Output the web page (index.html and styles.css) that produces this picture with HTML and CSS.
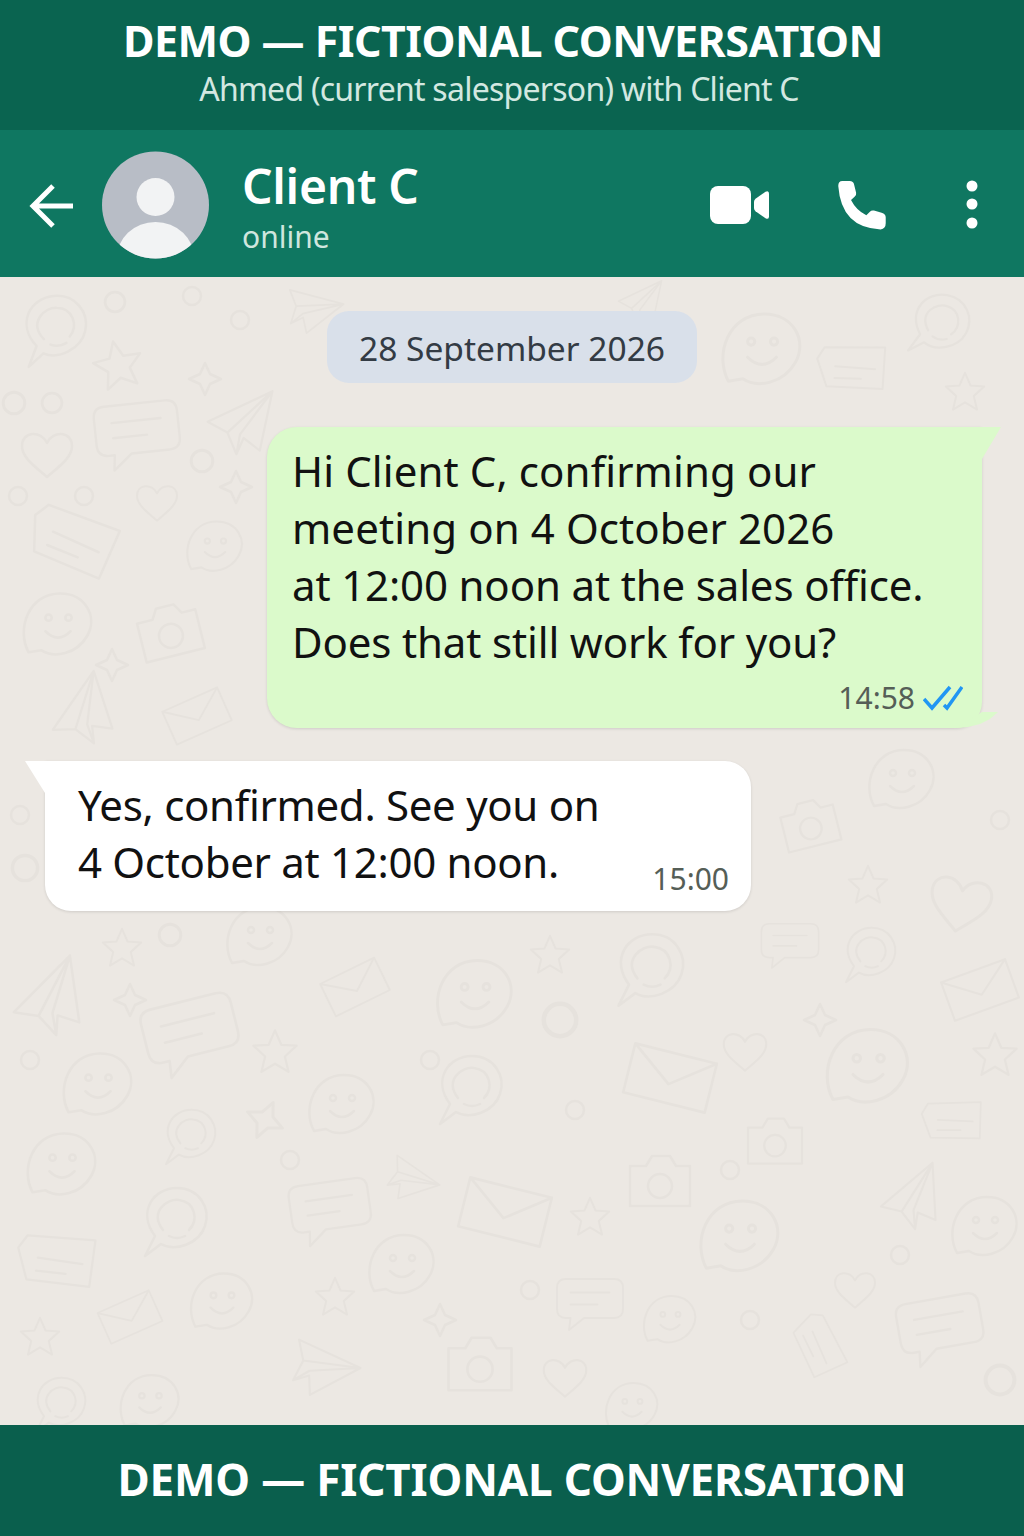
FILE: index.html
```html
<!DOCTYPE html>
<html lang="en">
<head>
    <meta charset="UTF-8">
    <meta name="viewport" content="width=device-width, initial-scale=1.0">
    <title>Demo - Fictional Conversation</title>
    <link rel="stylesheet" href="styles.css">
</head>
<body>
    <div class="phone">
        <header class="banner">
            <h1>DEMO — FICTIONAL CONVERSATION</h1>
            <p>Ahmed (current salesperson) with Client C</p>
        </header>

        <div class="appbar">
            <svg class="back" width="46" height="46" viewBox="0 0 46 46">
                <path d="M44 23H5M24 3 4 23l20 20" fill="none" stroke="#fff" stroke-width="5"/>
            </svg>
            <svg class="avatar" width="107" height="108" viewBox="0 0 107 108">
                <defs><clipPath id="avatarClip"><circle cx="53.5" cy="54" r="53.5"/></clipPath></defs>
                <circle cx="53.5" cy="54" r="53.5" fill="#b8bdc6"/>
                <circle cx="53.5" cy="46" r="19" fill="#f2f3f4"/>
                <ellipse cx="53.5" cy="108" rx="39" ry="37" fill="#f2f3f4" clip-path="url(#avatarClip)"/>
            </svg>
            <div class="contact">
                <div class="contact-name">Client C</div>
                <div class="contact-status">online</div>
            </div>
            <div class="appbar-icons">
                <svg width="60" height="38" viewBox="0 0 60 38">
                    <rect x="0" y="0" width="41" height="38" rx="8" fill="#fff"/>
                    <path d="M44 16q0-2 1.500-3.200l10-7q3.500-1.800 3.500 2v22.400q0 3.800-3.500 2l-10-7q-1.500-1.200-1.500-3.200z" fill="#fff"/>
                </svg>
                <svg width="49" height="50" viewBox="0 0 47.500 49">
                    <path d="M4 1h7q4 0 4.500 3.500l2 8q.5 2.500-1.500 4l-3.500 3q5 10 15 15l3.500-3.500q1.500-1.500 4-1l7.500 2q4 1 4 4.500v6q0 5.500-5 6Q3 47 0 6q0-5 4-5z" fill="#fff"/>
                </svg>
                <svg class="menu-dots" width="12" height="50" viewBox="0 0 12 50">
                    <circle cx="6" cy="6" r="5.500" fill="#fff"/>
                    <circle cx="6" cy="24" r="5.500" fill="#fff"/>
                    <circle cx="6" cy="43" r="5.500" fill="#fff"/>
                </svg>
            </div>
        </div>

        <main class="chat">
            <!-- wallpaper doodles -->
            <svg class="wallpaper" width="1024" height="1148" viewBox="0 277 1024 1148">
                <defs>
                    <g id="star"><path d="M0-24 7-8 24-7 11 5 15 22 0 13-15 22-11 5-24-7-7-8z" stroke-linejoin="round"/></g>
                    <g id="heart"><path d="M0 22C-14 10-25 2-25-9-25-24-6-25 0-12 6-25 25-24 25-9 25 2 14 10 0 22z" stroke-linejoin="round"/></g>
                    <g id="msg"><path d="M-32-28H32Q44-28 44-16V12Q44 24 32 24H-8L-28 40-26 24H-32Q-44 24-44 12V-16Q-44-28-32-28z" stroke-linejoin="round"/><path d="M-26-10H26M-26 6H10"/></g>
                    <g id="round"><path d="M-30 34-20 14C-38-10-22-34 2-34 24-34 36-14 30 4 24 22 0 30-14 22z" stroke-linejoin="round"/><path d="M-12 8C-26-10-8-24 4-22 20-20 24-2 14 8"/><path d="M-6 14Q2 18 10 14"/></g>
                    <g id="plane"><path d="M36-32-36 2-14 14-4 38 4 20 22 34zM-14 14 36-32 0 16-4 38" stroke-linejoin="round"/></g>
                    <g id="smile"><path d="M-28 26C-40 4-28-30 2-30 26-30 38-8 28 10 18 28-4 32-16 24z" stroke-linejoin="round"/><circle cx="-9" cy="-7" r="3"/><circle cx="10" cy="-7" r="3"/><path d="M-12 6Q0 18 12 6"/></g>
                    <g id="env"><path d="M-40-24H40V24H-40zM-40-24 0 6 40-24" stroke-linejoin="round"/></g>
                    <g id="note"><path d="M-44-20-32-32 42-16 28 34-40 16-44-20z" stroke-linejoin="round"/><path d="M-24-6 24 8M-28 8 4 16"/></g>
                    <g id="cam"><path d="M-30-16H-14L-8-26H10L16-16H30V24H-30z" stroke-linejoin="round"/><circle cx="0" cy="4" r="12"/></g>
                    <g id="spark"><path d="M0-16 5-5 16 0 5 5 0 16-5 5-16 0-5-5z" stroke-linejoin="round"/></g>
                    <g id="dot"><circle r="9"/></g>
                </defs>
                <g fill="none" stroke="#e6e2dd" stroke-width="2.500" stroke-linecap="round">
                    <use href="#round" transform="translate(55 330) scale(1) rotate(-6)"/>
                    <use href="#star" transform="translate(118 365) rotate(-12)"/>
                    <use href="#dot" transform="translate(115 302) scale(1.100)"/>
                    <use href="#dot" transform="translate(192 296)"/>
                    <use href="#dot" transform="translate(14 403) scale(1.200)"/>
                    <use href="#dot" transform="translate(52 403) scale(1.100)"/>
                    <use href="#dot" transform="translate(18 496)"/>
                    <use href="#dot" transform="translate(84 496)"/>
                    <use href="#dot" transform="translate(202 461) scale(1.200)"/>
                    <use href="#spark" transform="translate(205 379)"/>
                    <use href="#spark" transform="translate(236 487)"/>
                    <use href="#plane" transform="translate(240 420) scale(.900)"/>
                    <use href="#plane" transform="translate(310 305) scale(.700) rotate(40)"/>
                    <use href="#msg" transform="translate(137 430) rotate(-6) scale(.950)"/>
                    <use href="#heart" transform="translate(47 455) scale(1)"/>
                    <use href="#heart" transform="translate(157 503) scale(.800)"/>
                    <use href="#note" transform="translate(76 541) rotate(8)"/>
                    <use href="#smile" transform="translate(215 547) scale(.850)"/>
                    <use href="#smile" transform="translate(58 625) scale(1.050)"/>
                    <use href="#cam" transform="translate(170 632) rotate(-14)"/>
                    <use href="#plane" transform="translate(80 712) scale(.900) rotate(-30)"/>
                    <use href="#env" transform="translate(197 716) rotate(-24) scale(.750)"/>
                    <use href="#spark" transform="translate(112 665)"/>
                    <use href="#smile" transform="translate(762 350) scale(1.200)"/>
                    <use href="#note" transform="translate(855 367) rotate(-12) scale(.800)"/>
                    <use href="#round" transform="translate(940 325) scale(.900) rotate(10)"/>
                    <use href="#star" transform="translate(965 392) scale(.800)"/>
                    <use href="#plane" transform="translate(640 300) scale(.600)"/>
                    <use href="#dot" transform="translate(240 320)"/>
                    <use href="#smile" transform="translate(902 780) scale(1)"/>
                    <use href="#cam" transform="translate(810 825) rotate(-14) scale(.900)"/>
                    <use href="#star" transform="translate(868 885) scale(.800)"/>
                    <use href="#heart" transform="translate(960 905) rotate(10) scale(1.200)"/>
                    <use href="#dot" transform="translate(1000 820)"/>
                    <use href="#dot" transform="translate(20 815)"/>
                    <use href="#dot" transform="translate(25 868) scale(1.400)"/>
                    <use href="#smile" transform="translate(260 937) scale(1)"/>
                    <use href="#star" transform="translate(122 948) scale(.800)"/>
                    <use href="#dot" transform="translate(170 935) scale(1.200)"/>
                    <use href="#env" transform="translate(355 987) rotate(-26) scale(.750)"/>
                    <use href="#smile" transform="translate(475 995) scale(1.150)"/>
                    <use href="#star" transform="translate(550 955) scale(.800)"/>
                    <use href="#round" transform="translate(650 970) scale(1.050)"/>
                    <use href="#msg" transform="translate(790 942) scale(.650)"/>
                    <use href="#round" transform="translate(870 955) scale(.800)"/>
                    <use href="#env" transform="translate(980 990) rotate(-20) scale(.850)"/>
                    <use href="#plane" transform="translate(47 998) rotate(-20) scale(1)"/>
                    <use href="#msg" transform="translate(190 1030) rotate(-14) scale(1.050)"/>
                    <use href="#star" transform="translate(275 1052) scale(.900)"/>
                    <use href="#smile" transform="translate(98 1085) scale(1.050)"/>
                    <use href="#round" transform="translate(190 1137) scale(.800)"/>
                    <use href="#smile" transform="translate(342 1105) scale(1)"/>
                    <use href="#spark" transform="translate(265 1120) rotate(25) scale(1.200)"/>
                    <use href="#round" transform="translate(470 1090) scale(1)"/>
                    <use href="#plane" transform="translate(410 1175) rotate(60) scale(.650)"/>
                    <use href="#env" transform="translate(670 1078) rotate(14) scale(1.050)"/>
                    <use href="#heart" transform="translate(745 1052) scale(.850)"/>
                    <use href="#smile" transform="translate(868 1067) scale(1.250)"/>
                    <use href="#cam" transform="translate(775 1142) scale(.900)"/>
                    <use href="#note" transform="translate(955 1120) rotate(-14) scale(.700)"/>
                    <use href="#star" transform="translate(995 1055) scale(.900)"/>
                    <use href="#smile" transform="translate(62 1165) scale(1.050)"/>
                    <use href="#round" transform="translate(175 1222) scale(1)"/>
                    <use href="#msg" transform="translate(330 1207) rotate(-8) scale(.900)"/>
                    <use href="#env" transform="translate(505 1212) rotate(14) scale(1.050)"/>
                    <use href="#cam" transform="translate(660 1182) scale(1)"/>
                    <use href="#smile" transform="translate(740 1237) scale(1.200)"/>
                    <use href="#plane" transform="translate(910 1197) rotate(-15) scale(.850)"/>
                    <use href="#smile" transform="translate(985 1227) scale(1)"/>
                    <use href="#note" transform="translate(60 1260) rotate(-8) scale(.900)"/>
                    <use href="#smile" transform="translate(402 1265) scale(1)"/>
                    <use href="#star" transform="translate(590 1217) scale(.800)"/>
                    <use href="#smile" transform="translate(222 1302) scale(.950)"/>
                    <use href="#env" transform="translate(130 1317) rotate(-24) scale(.700)"/>
                    <use href="#star" transform="translate(40 1337) scale(.800)"/>
                    <use href="#plane" transform="translate(320 1362) rotate(50) scale(.850)"/>
                    <use href="#msg" transform="translate(590 1300) scale(.750)"/>
                    <use href="#note" transform="translate(820 1347) rotate(50) scale(.700)"/>
                    <use href="#msg" transform="translate(940 1325) rotate(-10) scale(.950)"/>
                    <use href="#smile" transform="translate(670 1320) scale(.800)"/>
                    <use href="#cam" transform="translate(480 1365) scale(1.050)"/>
                    <use href="#heart" transform="translate(565 1378) scale(.850)"/>
                    <use href="#smile" transform="translate(150 1402) scale(.900)"/>
                    <use href="#round" transform="translate(60 1405) scale(.800)"/>
                    <use href="#smile" transform="translate(632 1407) scale(.800)"/>
                    <use href="#heart" transform="translate(855 1290) scale(.800)"/>
                    <use href="#star" transform="translate(335 1297) scale(.800)"/>
                    <use href="#dot" transform="translate(1000 1380) scale(1.600)"/>
                    <use href="#dot" transform="translate(900 1255)"/>
                    <use href="#dot" transform="translate(430 1060)"/>
                    <use href="#dot" transform="translate(730 1170)"/>
                    <use href="#dot" transform="translate(560 1020) scale(1.800)"/>
                    <use href="#dot" transform="translate(575 1110)"/>
                    <use href="#dot" transform="translate(30 1060)"/>
                    <use href="#dot" transform="translate(290 1160)"/>
                    <use href="#dot" transform="translate(530 1290)"/>
                    <use href="#dot" transform="translate(750 1320)"/>
                    <use href="#spark" transform="translate(820 1020)"/>
                    <use href="#spark" transform="translate(130 1000)"/>
                    <use href="#spark" transform="translate(440 1320)"/>
                </g>
            </svg>

            <div class="date-pill">28 September 2026</div>

            <div class="bubble sent">
                <p><span class="wide">Hi Client C, confirming our</span><br><span class="wide">meeting on 4 October 2026</span><br>at 12:00 noon at the sales office.<br>Does that still work for you?</p>
                <div class="meta">
                    <span>14:58</span>
                    <svg width="40" height="26" viewBox="0 0 40 26">
                        <path d="M1 14l8 9L27 2M21 20l3 3L39 2" fill="none" stroke="#2196f3" stroke-width="3.500"/>
                    </svg>
                </div>
            </div>

            <div class="bubble received">
                <p>Yes, confirmed. See you on<br>4 October at 12:00 noon.</p>
                <span class="time">15:00</span>
            </div>
        </main>

        <footer class="banner-bottom">DEMO — FICTIONAL CONVERSATION</footer>
    </div>
</body>
</html>
```

FILE: styles.css
```css
body {
    margin: 0;
    font-family: "Noto Sans", sans-serif;
}
.phone {
    width: 1024px;
    height: 1536px;
    display: flex;
    flex-direction: column;
    overflow: hidden;
}
.banner {
    height: 130px;
    box-sizing: border-box;
    padding-top: 13px;
    background: #0a6450;
    color: #fff;
    text-align: center;
}
.banner h1 {
    margin: 0 18px 0 0;
    font-size: 43px;
    line-height: 55px;
    font-weight: 700;
    letter-spacing: -0.55px;
}
.banner p {
    margin: 0 26px 0 0;
    font-size: 32px;
    line-height: 41px;
    color: #d3e8e1;
    letter-spacing: -0.75px;
}
.appbar {
    height: 147px;
    box-sizing: border-box;
    padding-top: 2px;
    background: #0f7761;
    display: flex;
    align-items: center;
    color: #fff;
}
.back {
    margin: 2px 0 0 29px;
}
.avatar {
    margin-left: 27px;
}
.contact {
    margin-left: 33px;
    padding-top: 4px;
}
.contact-name {
    font-size: 48px;
    line-height: 60px;
    font-weight: 600;
    letter-spacing: -0.3px;
}
.contact-status {
    margin-top: 1px;
    font-size: 30px;
    line-height: 40px;
    color: #cfe6de;
}
.appbar-icons {
    margin-left: auto;
    margin-right: 46px;
    display: flex;
    align-items: center;
    gap: 68px;
}
.menu-dots {
    margin-left: 11px;
}
.chat {
    position: relative;
    flex: 1;
    background: #ece8e3;
    overflow: hidden;
}
.wallpaper {
    position: absolute;
    left: 0;
    top: 0;
}
.date-pill {
    position: relative;
    width: 370px;
    height: 72px;
    margin: 34px 0 44px 327px;
    border-radius: 22px;
    background: #d9e0ea;
    color: #333b44;
    font-size: 33.5px;
    line-height: 74px;
    text-align: center;
}
.bubble {
    position: relative;
    background: #fff;
    color: #111;
    font-size: 42px;
    line-height: 57px;
    letter-spacing: -0.15px;
    box-shadow: 0 1px 3px rgba(0, 0, 0, 0.12);
}
.bubble p {
    margin: 0;
}
.bubble::before {
    content: "";
    position: absolute;
    top: 0;
    width: 19px;
    height: 32px;
}
.wide {
    letter-spacing: 0.1px;
}
.sent {
    width: 715px;
    height: 301px;
    box-sizing: border-box;
    margin-left: 267px;
    padding: 15px 26px 0 25px;
    background: #dbfacb;
    border-radius: 30px 0 26px 30px;
}
.sent::before {
    left: 100%;
    background: #dbfacb;
    clip-path: polygon(0 0, 100% 0, 0 100%);
}
.sent::after {
    content: "";
    position: absolute;
    right: -16px;
    bottom: 0;
    width: 42px;
    height: 16px;
    background: #dbfacb;
    clip-path: polygon(0 100%, 26px 0, 100% 0, 34px 7px, 24px 12px, 12px 15px);
}
.meta {
    display: flex;
    justify-content: flex-end;
    align-items: center;
    gap: 8px;
    margin: 8px -7px 0 0;
    font-size: 30px;
    line-height: 40px;
    letter-spacing: 0;
    color: #555e57;
}
.received {
    width: 706px;
    height: 150px;
    box-sizing: border-box;
    margin: 33px 0 0 45px;
    padding: 15px 33px 0;
    border-radius: 0 26px 26px 26px;
    letter-spacing: -0.3px;
}
.received::before {
    right: 100%;
    width: 20px;
    background: #fff;
    clip-path: polygon(0 0, 100% 0, 100% 100%);
}
.time {
    position: absolute;
    right: 22px;
    bottom: 12px;
    font-size: 30px;
    line-height: 40px;
    letter-spacing: 0;
    color: #555e57;
}
.banner-bottom {
    height: 111px;
    background: #0a5f4d;
    color: #fff;
    font-size: 44px;
    font-weight: 700;
    line-height: 109px;
    letter-spacing: -0.17px;
    text-align: center;
}
```
